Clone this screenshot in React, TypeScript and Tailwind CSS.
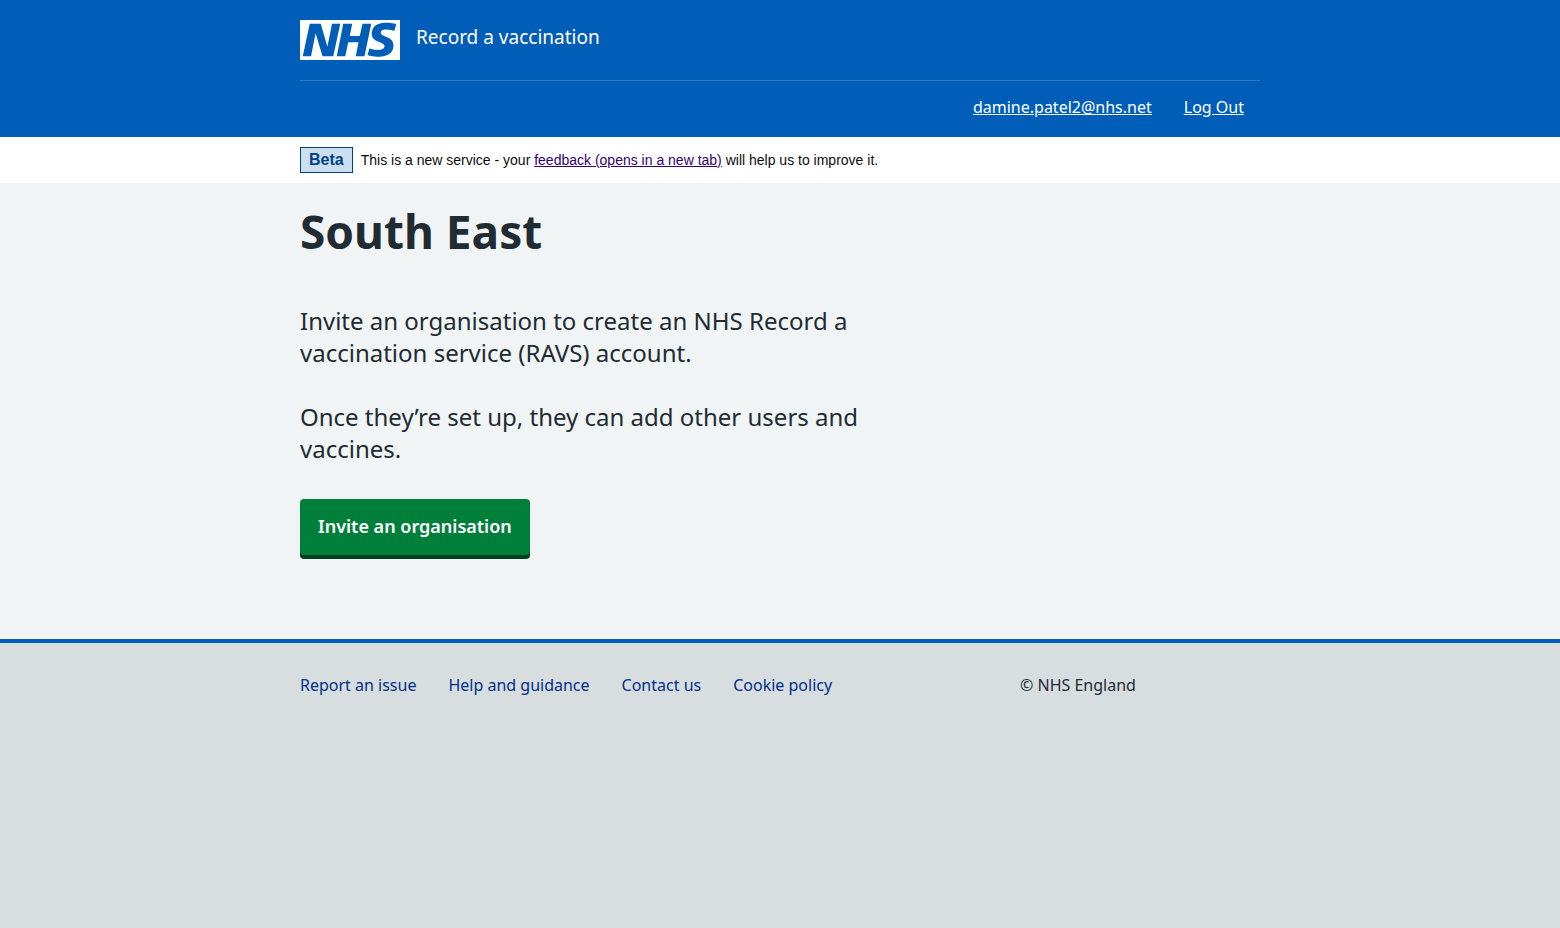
import React from "react";

const container = "mx-auto w-full max-w-[992px] px-4";

const footerLinks = ["Report an issue", "Help and guidance", "Contact us", "Cookie policy"];

function NhsLogo() {
  return (
    <svg className="h-10 w-[100px]" viewBox="0 0 40 16" role="img" aria-label="NHS">
      <path fill="#fff" d="M0 0h40v16H0z" />
      <path
        fill="#005eb8"
        d="M3.9 1.5h4.4l2.6 9h.1l1.8-9h3.3l-2.8 13H9l-2.7-9h-.1l-1.8 9H1.1M17.3 1.5h3.6l-1 4.9h4L25 1.5h3.5l-2.7 13h-3.5l1.1-5.6h-4.1l-1.2 5.6h-3.4M37.7 4.4c-.7-.3-1.6-.6-2.9-.6-1.4 0-2.5.2-2.5 1.3 0 1.8 5.1 1.2 5.1 5.1 0 3.6-3.3 4.5-6.4 4.5-1.3 0-2.9-.3-4-.7l.8-2.7c.7.4 2.1.7 3.2.7s2.8-.2 2.8-1.5c0-2.1-5.1-1.3-5.1-5 0-3.4 2.9-4.4 5.8-4.4 1.6 0 3.1.2 4 .6"
      />
    </svg>
  );
}

function Header() {
  return (
    <header className="bg-[#005eb8] text-white">
      <div className={container}>
        <div className="flex items-center gap-4 border-b border-white/20 py-5">
          <NhsLogo />
          <a href="#home" className="pb-[6px] text-[19px] leading-7">
            Record a vaccination
          </a>
        </div>
        <nav aria-label="Account" className="flex flex-wrap justify-end gap-8 px-4 pt-[14px] pb-[18px] text-[16px] leading-6">
          <a href="#account" className="underline">
            damine.patel2@nhs.net
          </a>
          <a href="#logout" className="underline">
            Log Out
          </a>
        </nav>
      </div>
    </header>
  );
}

function BetaBanner() {
  return (
    <div className="bg-white font-['Liberation_Sans',Arial,sans-serif]">
      <div className={container}>
        <div className="flex items-center gap-2 py-[10px]">
          <strong className="border border-[#004281] bg-[#ccdff1] px-2 text-[16px] leading-6 font-bold text-[#004281]">
            Beta
          </strong>
          <p className="text-[14px] leading-5 text-[#0b0c0c]">
            This is a new service - your{" "}
            <a href="#feedback" className="text-[#330072] underline">
              feedback (opens in a new tab)
            </a>{" "}
            will help us to improve it.
          </p>
        </div>
      </div>
    </div>
  );
}

export default function App() {
  return (
    <div className="flex min-h-screen flex-col bg-[#f0f4f5] font-['Noto_Sans','Open_Sans',sans-serif] text-[#212b32]">
      <Header />
      <BetaBanner />
      <main className={container}>
        <div className="max-w-[640px] pt-5 pb-20">
          <h1 className="mb-[46px] text-[46px] leading-14 font-bold">South East</h1>
          <div className="max-w-[576px] space-y-8 text-[24px] leading-8">
            <p>Invite an organisation to create an NHS Record a vaccination service (RAVS) account.</p>
            <p>Once they’re set up, they can add other users and vaccines.</p>
          </div>
          <button
            type="button"
            className="mt-[34px] mb-1 rounded-[4px] bg-[#007f3b] px-[18px] pt-[13px] pb-[15px] text-[18px] leading-7 font-semibold text-white shadow-[0_4px_0_#00401e]"
          >
            Invite an organisation
          </button>
        </div>
      </main>
      <footer className="grow border-t-4 border-[#005eb8] bg-[#d8dde0]">
        <div className={container}>
          <div className="grid grid-cols-4 py-[30px] text-[16px] leading-6">
            <ul className="col-span-3 flex flex-wrap gap-x-8 gap-y-2">
              {footerLinks.map((label) => (
                <li key={label}>
                  <a href="#footer" className="text-[#003087]">
                    {label}
                  </a>
                </li>
              ))}
            </ul>
            <p>© NHS England</p>
          </div>
        </div>
      </footer>
    </div>
  );
}
